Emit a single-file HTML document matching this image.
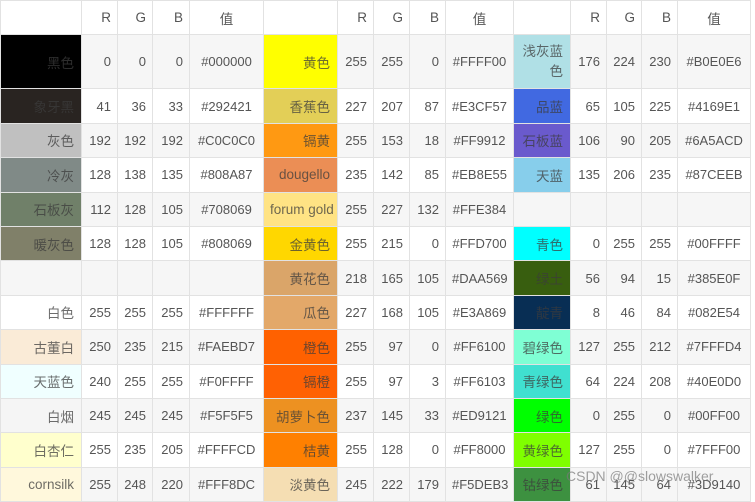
<!DOCTYPE html>
<html><head><meta charset="utf-8"><style>
body{margin:0;background:#fff;width:755px;height:495px;overflow:hidden;font-family:"Liberation Sans","Noto Sans CJK SC",sans-serif;}
table{border-collapse:collapse;table-layout:fixed;width:750px;font-size:13px;color:#555;}
td,th{border:1px solid #e2e2e2;padding:0 6px;white-space:nowrap;overflow:hidden;font-weight:normal;}
th{height:32px;text-align:right;font-size:13.5px;color:#555;}
th.v{text-align:center}
tr{height:34.4px}
tr.r1{height:54px}
tr:nth-child(even) td{background:#f6f6f6}
td{text-align:right}
td.v{text-align:center}
td.n{color:rgba(60,60,60,.75);font-size:13.5px;padding-right:7px}
td.w{white-space:normal;line-height:20px}
.wm{position:absolute;left:566px;top:468px;font-size:14px;color:rgba(120,120,120,.7);}
</style></head><body>
<table>
<colgroup><col style="width:81px"><col style="width:36px"><col style="width:35px"><col style="width:37px"><col style="width:74px"><col style="width:74px"><col style="width:36px"><col style="width:36px"><col style="width:36px"><col style="width:68px"><col style="width:57px"><col style="width:36px"><col style="width:35px"><col style="width:36px"><col style="width:73px"></colgroup>
<tr><th></th><th>R</th><th>G</th><th>B</th><th class="v">值</th><th></th><th>R</th><th>G</th><th>B</th><th class="v">值</th><th></th><th>R</th><th>G</th><th>B</th><th class="v">值</th></tr>
<tr class="r1"><td class="n" style="background:#000">黑色</td><td>0</td><td>0</td><td>0</td><td class="v">#000000</td><td class="n" style="background:#FFFF00">黄色</td><td>255</td><td>255</td><td>0</td><td class="v">#FFFF00</td><td class="n w" style="background:#B0E0E6">浅灰蓝色</td><td>176</td><td>224</td><td>230</td><td class="v">#B0E0E6</td></tr>
<tr><td class="n" style="background:#292421">象牙黑</td><td>41</td><td>36</td><td>33</td><td class="v">#292421</td><td class="n" style="background:#E3CF57">香蕉色</td><td>227</td><td>207</td><td>87</td><td class="v">#E3CF57</td><td class="n" style="background:#4169E1">品蓝</td><td>65</td><td>105</td><td>225</td><td class="v">#4169E1</td></tr>
<tr><td class="n" style="background:#C0C0C0">灰色</td><td>192</td><td>192</td><td>192</td><td class="v">#C0C0C0</td><td class="n" style="background:#FF9912">镉黄</td><td>255</td><td>153</td><td>18</td><td class="v">#FF9912</td><td class="n" style="background:#6A5ACD">石板蓝</td><td>106</td><td>90</td><td>205</td><td class="v">#6A5ACD</td></tr>
<tr><td class="n" style="background:#808A87">冷灰</td><td>128</td><td>138</td><td>135</td><td class="v">#808A87</td><td class="n" style="background:#EB8E55">dougello</td><td>235</td><td>142</td><td>85</td><td class="v">#EB8E55</td><td class="n" style="background:#87CEEB">天蓝</td><td>135</td><td>206</td><td>235</td><td class="v">#87CEEB</td></tr>
<tr><td class="n" style="background:#708069">石板灰</td><td>112</td><td>128</td><td>105</td><td class="v">#708069</td><td class="n" style="background:#FFE384">forum gold</td><td>255</td><td>227</td><td>132</td><td class="v">#FFE384</td><td></td><td></td><td></td><td></td><td></td></tr>
<tr><td class="n" style="background:#808069">暖灰色</td><td>128</td><td>128</td><td>105</td><td class="v">#808069</td><td class="n" style="background:#FFD700">金黄色</td><td>255</td><td>215</td><td>0</td><td class="v">#FFD700</td><td class="n" style="background:#00FFFF">青色</td><td>0</td><td>255</td><td>255</td><td class="v">#00FFFF</td></tr>
<tr><td></td><td></td><td></td><td></td><td></td><td class="n" style="background:#DAA569">黄花色</td><td>218</td><td>165</td><td>105</td><td class="v">#DAA569</td><td class="n" style="background:#385E0F">绿土</td><td>56</td><td>94</td><td>15</td><td class="v">#385E0F</td></tr>
<tr><td class="n" style="background:#FFFFFF">白色</td><td>255</td><td>255</td><td>255</td><td class="v">#FFFFFF</td><td class="n" style="background:#E3A869">瓜色</td><td>227</td><td>168</td><td>105</td><td class="v">#E3A869</td><td class="n" style="background:#082E54">靛青</td><td>8</td><td>46</td><td>84</td><td class="v">#082E54</td></tr>
<tr><td class="n" style="background:#FAEBD7">古董白</td><td>250</td><td>235</td><td>215</td><td class="v">#FAEBD7</td><td class="n" style="background:#FF6100">橙色</td><td>255</td><td>97</td><td>0</td><td class="v">#FF6100</td><td class="n" style="background:#7FFFD4">碧绿色</td><td>127</td><td>255</td><td>212</td><td class="v">#7FFFD4</td></tr>
<tr><td class="n" style="background:#F0FFFF">天蓝色</td><td>240</td><td>255</td><td>255</td><td class="v">#F0FFFF</td><td class="n" style="background:#FF6103">镉橙</td><td>255</td><td>97</td><td>3</td><td class="v">#FF6103</td><td class="n" style="background:#40E0D0">青绿色</td><td>64</td><td>224</td><td>208</td><td class="v">#40E0D0</td></tr>
<tr><td class="n" style="background:#F5F5F5">白烟</td><td>245</td><td>245</td><td>245</td><td class="v">#F5F5F5</td><td class="n" style="background:#ED9121">胡萝卜色</td><td>237</td><td>145</td><td>33</td><td class="v">#ED9121</td><td class="n" style="background:#00FF00">绿色</td><td>0</td><td>255</td><td>0</td><td class="v">#00FF00</td></tr>
<tr><td class="n" style="background:#FFFFCD">白杏仁</td><td>255</td><td>235</td><td>205</td><td class="v">#FFFFCD</td><td class="n" style="background:#FF8000">桔黄</td><td>255</td><td>128</td><td>0</td><td class="v">#FF8000</td><td class="n" style="background:#7FFF00">黄绿色</td><td>127</td><td>255</td><td>0</td><td class="v">#7FFF00</td></tr>
<tr><td class="n" style="background:#FFF8DC">cornsilk</td><td>255</td><td>248</td><td>220</td><td class="v">#FFF8DC</td><td class="n" style="background:#F5DEB3">淡黄色</td><td>245</td><td>222</td><td>179</td><td class="v">#F5DEB3</td><td class="n" style="background:#3D9140">钴绿色</td><td>61</td><td>145</td><td>64</td><td class="v">#3D9140</td></tr>
</table>
<div class="wm">CSDN @@slowswalker</div>
</body></html>
